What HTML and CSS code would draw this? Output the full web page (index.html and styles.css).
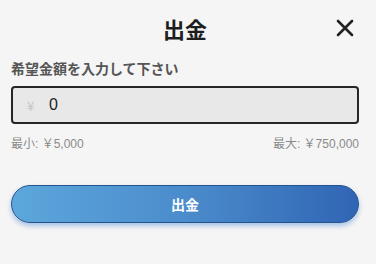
FILE: index.html
```html
<!DOCTYPE html>
<html lang="ja">
<head>
<meta charset="utf-8">
<link rel="stylesheet" href="styles.css">
</head>
<body>
<div class="sheet">
  <div class="header">
    <span class="spacer"></span>
    <h1 class="title">出金</h1>
    <button class="close" aria-label="閉じる">
      <svg width="18" height="18" viewBox="0 0 18 18"><path d="M2 2 L16 16 M16 2 L2 16" stroke="#222" stroke-width="2.6" stroke-linecap="round" fill="none"/></svg>
    </button>
  </div>
  <div class="label">希望金額を入力して下さい</div>
  <div class="field">
    <span class="yen">¥</span>
    <span class="value">0</span>
  </div>
  <div class="limits">
    <span>最小: ￥5,000</span>
    <span>最大: ￥750,000</span>
  </div>
  <button class="submit">出金</button>
</div>
</body>
</html>
```

FILE: styles.css
```css
html, body {
  margin: 0;
  background: #f5f5f5;
}
body {
  font-family: "Noto Sans CJK JP", "Noto Sans", sans-serif;
  width: 376px;
  height: 264px;
  overflow: hidden;
}
.sheet {
  padding: 13px 17px 0 11px;
}
.header {
  display: grid;
  grid-template-columns: 1fr auto 1fr;
  align-items: center;
  height: 30px;
}
.title {
  margin: 0;
  font-size: 22px;
  line-height: 30px;
  font-weight: 700;
  color: #1e1e1e;
}
.close {
  justify-self: end;
  margin-right: 4px;
  padding: 0;
  border: 0;
  background: none;
  width: 20px;
  height: 20px;
  display: flex;
  align-items: center;
  justify-content: center;
}
.label {
  margin-top: 15px;
  font-size: 14px;
  line-height: 20px;
  font-weight: 700;
  color: #555;
}
.field {
  margin-top: 8px;
  height: 38px;
  box-sizing: border-box;
  border: 2px solid #262626;
  border-radius: 4px;
  background: #e8e8e8;
  display: flex;
  align-items: center;
  padding-left: 14px;
}
.yen {
  color: #c4c4c4;
  font-size: 13px;
  width: 22px;
}
.value {
  color: #222;
  font-size: 16px;
  font-family: "Liberation Sans", sans-serif;
}
.limits {
  margin-top: 12px;
  display: flex;
  justify-content: space-between;
  font-family: "Liberation Sans", "Noto Sans CJK JP", sans-serif;
  font-size: 12px;
  line-height: 16px;
  color: #8a8a8a;
}
.submit {
  display: block;
  width: 100%;
  margin-top: 33px;
  height: 38px;
  border: 1px solid #24548e;
  border-radius: 19px;
  background: linear-gradient(90deg, #5ca7db 0%, #4b8ccc 50%, #3065b4 100%);
  box-shadow: 0 3px 5px rgba(70, 130, 210, 0.45);
  color: #fff;
  font-family: "Noto Sans CJK JP", sans-serif;
  font-size: 14px;
  font-weight: 700;
}
```
